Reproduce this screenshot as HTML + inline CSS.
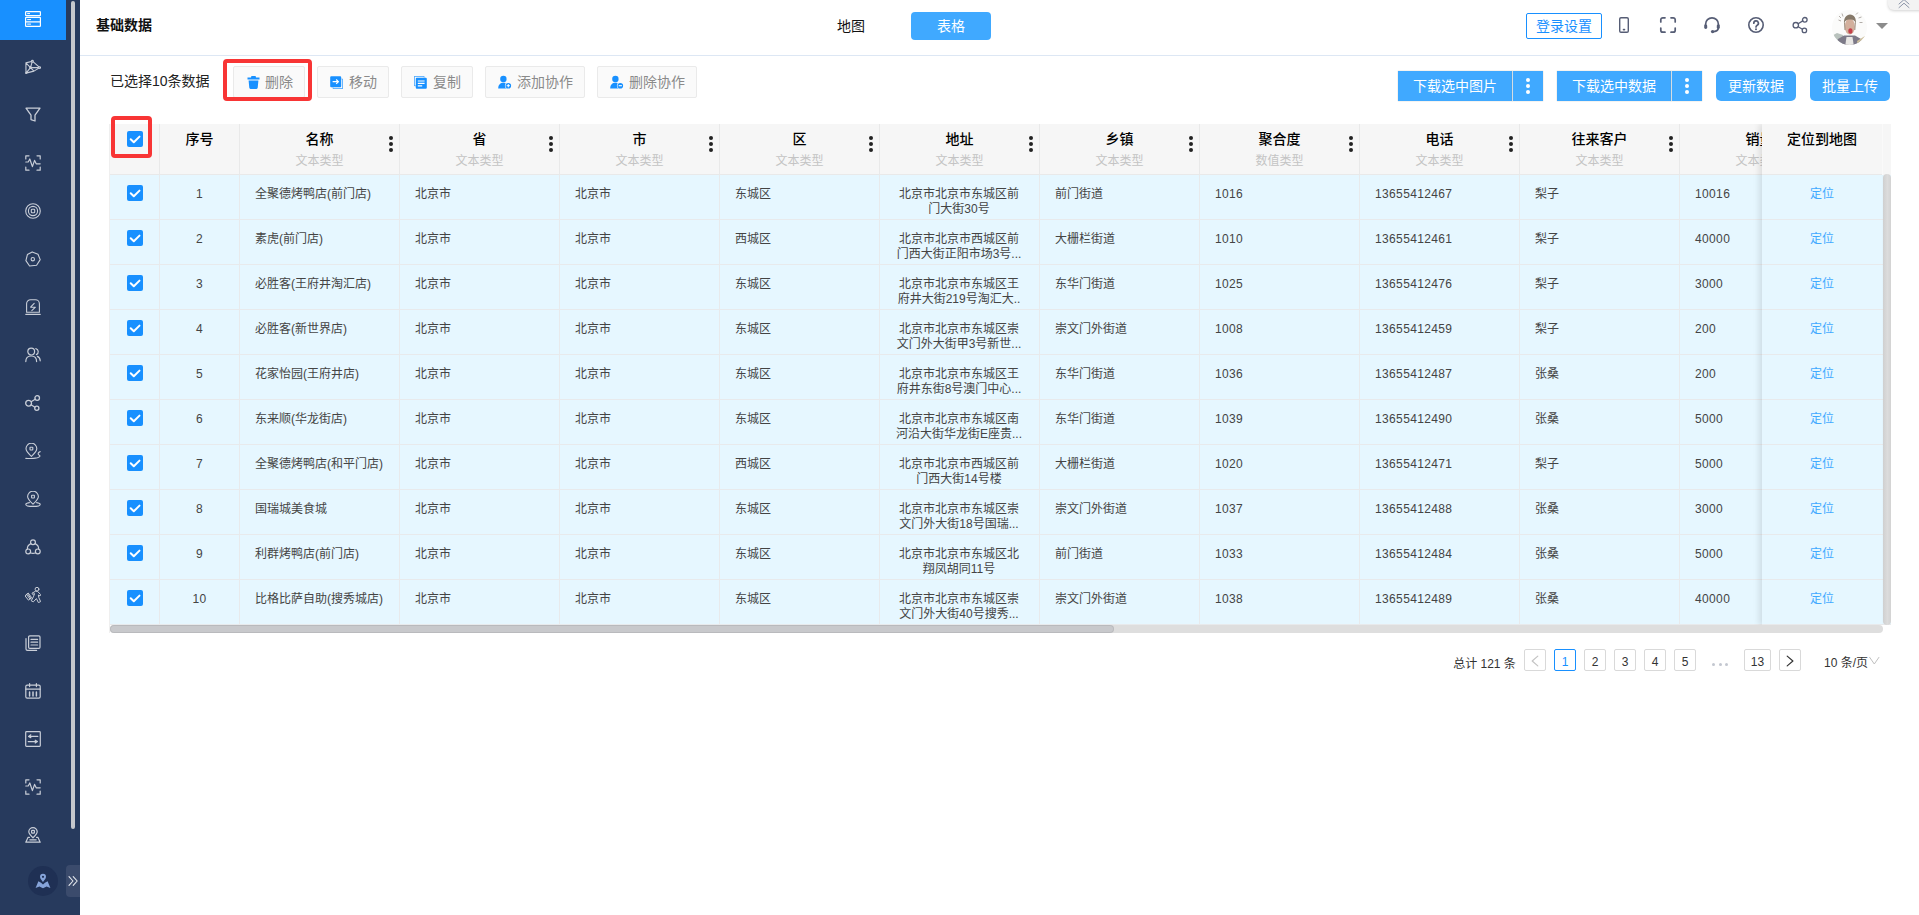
<!DOCTYPE html>
<html lang="zh-CN">
<head>
<meta charset="utf-8">
<title>基础数据</title>
<style>
*{box-sizing:border-box;margin:0;padding:0}
html,body{width:1919px;height:915px;overflow:hidden;background:#fff}
body{font-family:"Liberation Sans","Noto Sans CJK SC",sans-serif;font-size:12px;color:#333;position:relative}
.abs{position:absolute}
/* sidebar */
.side{position:absolute;left:0;top:0;width:80px;height:915px;background:#273a5d}
.side .act{position:absolute;left:0;top:0;width:66px;height:40px;background:#1890ff}
.side svg.ic{position:absolute;left:25px;width:16px;height:16px;fill:none;stroke:#c9ced8;stroke-width:1.1;stroke-linecap:round;stroke-linejoin:round}
.side .sb{position:absolute;left:71px;top:1px;width:4px;height:828px;background:#c5c7cc;border-radius:3px}
.side .circ{position:absolute;left:28px;top:866px;width:30px;height:30px;border-radius:50%;background:#1f3054}
.side .exp{position:absolute;left:66px;top:865px;width:14px;height:32px;background:#3b4b6c;border-radius:4px 0 0 4px}
/* header */
.hdr{position:absolute;left:80px;top:0;width:1839px;height:56px;border-bottom:1px solid #dde7f4;background:#fff}
.title{position:absolute;left:96px;top:15px;font-size:14px;line-height:20px;font-weight:bold;color:#111}
.tab1{position:absolute;left:811px;top:12px;width:80px;height:28px;line-height:28px;text-align:center;font-size:14px;color:#111}
.tab2{position:absolute;left:911px;top:12px;width:80px;height:28px;line-height:28px;text-align:center;font-size:14px;color:#fff;background:#40a9ff;border-radius:4px}
.login{position:absolute;left:1526px;top:13px;width:76px;height:26px;border:1px solid #1890ff;border-radius:2px;color:#1890ff;font-size:14px;line-height:24px;text-align:center;background:#fff}
.hic{position:absolute;fill:none;stroke:#565d75;stroke-width:1.6;stroke-linecap:round;stroke-linejoin:round}
.avatar{position:absolute;left:1832px;top:10px;width:35px;height:35px;border-radius:50%;overflow:hidden}
.caret{position:absolute;left:1876px;top:23px;width:0;height:0;border-left:6px solid transparent;border-right:6px solid transparent;border-top:6px solid #8c8c8c}
.fold{position:absolute;left:1888px;top:-6px;width:40px;height:16px;background:#f3f3f3;border-radius:6px;box-shadow:0 1px 3px rgba(0,0,0,.18)}
/* toolbar */
.sel{position:absolute;left:110px;top:71px;font-size:14px;line-height:20px;color:#222}
.tb{position:absolute;top:66px;height:32px;background:#fafafa;border:1px solid #eaeaea;border-radius:2px;font-size:14px;color:#8a8a8a;line-height:30px;padding-left:31px;white-space:nowrap}
.tb svg{position:absolute;left:13px;top:9px;width:13px;height:13px;fill:#1890ff}
.red{position:absolute;border:4px solid #f83535;border-radius:4px}
.bb{position:absolute;top:71px;height:30px;background:#40a9ff;color:#fff;font-size:14px;line-height:30px;text-align:center;white-space:nowrap}
.bb.sq{box-shadow:0 0 1px rgba(120,90,60,.45)}
.bb.rd{border-radius:5px}
.bb i{position:absolute;left:50%;margin-left:-2px;width:4px;height:4px;border-radius:50%;background:#fff}
/* table */
.tbl{position:absolute;left:110px;top:124px;width:1781px;height:510px;overflow:hidden}
.thead{position:absolute;left:0;top:0;width:1781px;height:51px;background:#f6f6f6;border-bottom:1px solid #e9e9e9}
.th{position:absolute;top:0;height:51px;width:160px;border-right:1px solid #e9e9e9;text-align:center}
.th b{display:block;font-size:14px;line-height:20px;margin-top:5px;color:#000;font-weight:500}
.th em{display:block;font-style:normal;font-size:12px;line-height:18px;color:#c4c4c4;margin-top:3px}
.th .dots{position:absolute;right:6px;top:12px;width:4px;height:16px}
.th .dots i{position:absolute;left:0;width:4px;height:4px;border-radius:50%;background:#222}
.tbody{position:absolute;left:0;top:51px;width:1781px;height:450px;background:#e6f7ff}
.tr{position:absolute;left:0;width:1781px;height:45px;border-bottom:1px solid #e8eaec;display:flex}
.td{flex:0 0 160px;width:160px;height:45px;border-right:1px solid #e8eaec;padding:12px 15px 0 15px;line-height:15px;font-size:12px;color:#444;white-space:nowrap;overflow:hidden}
.td.c0{flex-basis:50px;width:50px;padding:10px 0 0 17px}
.td.c1{flex-basis:80px;width:80px;text-align:center;padding-left:0;padding-right:0}
.td.addr{text-align:center;white-space:nowrap;padding-left:0;padding-right:1px}
.n{letter-spacing:.36px}
.cb{display:block;width:16px;height:16px;background:#1890ff;border-radius:2px}
.cb svg{display:block;width:16px;height:16px;fill:none;stroke:#fff;stroke-width:2;stroke-linecap:round;stroke-linejoin:round}
.fix{position:absolute;left:1652px;top:0;width:120px;height:501px;box-shadow:-3px 0 6px rgba(0,0,0,.10);background:#e6f7ff}
.fth{height:51px;background:#f6f6f6;border-bottom:1px solid #e9e9e9;text-align:center;font-size:14px;font-weight:500;color:#000;line-height:20px;padding-top:5px}
.ftd{height:45px;border-bottom:1px solid #e8eaec;text-align:center;color:#40a9ff;font-size:12px;line-height:15px;padding-top:12px}
.gut{position:absolute;left:1772px;top:0;width:9px;height:51px;background:#f6f6f6;border-left:1px solid #fafafa}
.vsb{position:absolute;left:1773px;top:50px;width:8px;height:451px;background:linear-gradient(90deg,#cfcfcf,#dcdcdc 55%,#d3d3d3);border-radius:4px}
.hsbt{position:absolute;left:0;top:501px;width:1773px;height:8px;background:#dedede;border-radius:4px}
.hsb{position:absolute;left:0;top:501px;width:1004px;height:8px;background:#c8c9cc;border-radius:4px;box-shadow:inset 0 0 0 1px rgba(0,0,0,.07)}
/* pagination */
.pd{position:absolute;top:0;width:3px;height:3px;border-radius:50%;background:#c3c7d0}
.pg{position:absolute;top:649px;height:22px;line-height:20px;font-size:12px;color:#333;text-align:center}
.pg.bx{border:1px solid #d9d9d9;border-radius:2px;background:#fff;width:22px;line-height:24px}
.pg.on{border-color:#1890ff;color:#1890ff}
.pg svg{position:absolute;left:5px;top:5px;width:12px;height:12px;fill:none;stroke-width:1.2;stroke-linecap:round;stroke-linejoin:round}
</style>
</head>
<body>
<div class="side">
<div class="act"></div>
<svg class="ic" style="top:11px;stroke:#fff;stroke-width:1.2" viewBox="0 0 16 16"><rect x="0.6" y="0.6" width="14.8" height="4" rx="0.6"/><rect x="0.6" y="6.4" width="14.8" height="9" rx="0.6"/><path d="M0.6 10.9H15.4"/><path d="M2.6 2.6h2M2.6 8.6h3M2.6 13.1h3" stroke-width="1"/></svg>
<svg class="ic" style="top:59px" viewBox="0 0 16 16"><path d="M0.900 3.900L7.400 2.200L14.800 8.600L8.900 12.100L1 14.100ZM5.500 8.600H14.800M5.500 8.600L7.400 2.200M5.500 8.600L0.900 3.900M5.500 8.600L1 14.100M5.500 8.600L8.900 12.100"/><circle cx="5.500" cy="8.600" r="1.300" fill="#c9ced8" stroke="none"/><circle cx="1.200" cy="14" r="1.100" fill="#c9ced8" stroke="none"/><circle cx="7.400" cy="2.300" r="0.900" fill="#273a5d"/><circle cx="14.600" cy="8.600" r="0.900" fill="#273a5d"/></svg>
<svg class="ic" style="top:107px;stroke-width:1.3" viewBox="0 0 16 16"><path d="M1 1.2H15L10 8.2V14L6 12.6V8.2Z"/></svg>
<svg class="ic" style="top:155px;stroke-width:1.2" viewBox="0 0 16 16"><path d="M0.8 4V0.8H4M12 0.8h3.2V4M15.2 12v3.2H12M4 15.2H0.8V12"/><path d="M0.8 7h2.4l1.6-3l2.6 7.6l2.2-6.2l1.6 3.4h4"/></svg>
<svg class="ic" style="top:203px" viewBox="0 0 16 16"><circle cx="8" cy="8" r="7.3"/><circle cx="8" cy="8" r="4.6"/><rect x="6.3" y="6.3" width="3.4" height="3.4" rx="0.8"/></svg>
<svg class="ic" style="top:251px" viewBox="0 0 16 16"><path d="M7.2 0.9L13 3.2L15.2 8.6L11.6 14.2L4.6 15L0.9 9.6L2.4 3.6Z"/><circle cx="7.8" cy="8.2" r="1.7"/></svg>
<svg class="ic" style="top:299px" viewBox="0 0 16 16"><path d="M1.6 13.2V4.8a4 4 0 0 1 4-4h4.8a4 4 0 0 1 4 4v8.4Z"/><path d="M0.8 15.4H15.2"/><path d="M9.2 4.4L5.6 8.2H10.4L6.8 11.6"/></svg>
<svg class="ic" style="top:347px;stroke-width:1.2" viewBox="0 0 16 16"><circle cx="6.2" cy="4.6" r="3.4"/><path d="M0.8 14.6c0-3.6 2.4-5.6 5.4-5.6s5.4 2 5.4 5.6"/><path d="M10.8 1.6a3.2 3.2 0 0 1 0.6 6"/><path d="M12.4 9.4c1.8.8 2.8 2.4 2.8 4.4"/></svg>
<svg class="ic" style="top:395px;stroke-width:1.3" viewBox="0 0 16 16"><circle cx="3.6" cy="8.2" r="2.9"/><circle cx="12.2" cy="3" r="2.3"/><circle cx="11.8" cy="13.2" r="2.1"/><path d="M6.1 6.7L10.2 4.2M6.1 9.8L9.9 12.2"/></svg>
<svg class="ic" style="top:443px" viewBox="0 0 16 16"><path d="M6.4 13.4C3.6 10.8 1 8.6 1 5.6A5.4 5.4 0 0 1 11.8 5.6C11.8 8.6 9.2 10.8 6.4 13.4Z"/><rect x="5" y="4.2" width="2.8" height="2.8" rx="0.4"/><path d="M0.8 15.4c4 .4 8 .2 11.6-.6c2.4-.6 3.4-1.800 1.600-2.800c-1.600-1 -.6-3 1.200-3.400"/></svg>
<svg class="ic" style="top:491px" viewBox="0 0 16 16"><path d="M8 13.2C5.200 10.600 2.600 8.400 2.600 5.600A5.400 5.400 0 0 1 13.400 5.600C13.400 8.400 10.800 10.600 8 13.200Z"/><rect x="6.600" y="4.200" width="2.800" height="2.800" rx="0.400"/><path d="M4.400 11.600C2.200 12 .8 12.600.8 13.400c0 1.200 3.200 2 7.200 2s7.200-.8 7.200-2c0-.8-1.400-1.400-3.600-1.800"/></svg>
<svg class="ic" style="top:539px;stroke-width:1.2" viewBox="0 0 16 16"><circle cx="8" cy="3.200" r="2.400"/><circle cx="3.200" cy="12.400" r="2.400"/><circle cx="12.800" cy="12.400" r="2.400"/><path d="M5.800 4.600C3.400 5.800 2.200 7.800 2.400 10M10.200 4.600c2.400 1.200 3.600 3.200 3.400 5.400M5.400 13.800c1.600.8 3.600.8 5.200 0"/></svg>
<svg class="ic" style="top:587px;stroke-width:1" viewBox="0 0 16 16"><circle cx="12" cy="2.200" r="1.900"/><path d="M10.400 4.300L7 6.200L7.600 7.400L9.600 6.600L8.400 9.800L6.200 13.800L8.400 14.800L11.400 11.600L13.400 15.600L15.600 14.600L13.800 10.600L13.400 8L15 9L15.600 7.600L12.800 4.600Z"/><path d="M0.300 8.600L3.200 6L6.600 10.600L3.800 12.900Z"/><path d="M1.500 7.600L5 12M2.500 6.800L5.800 11.300"/></svg>
<svg class="ic" style="top:635px;stroke-width:1.2" viewBox="0 0 16 16"><rect x="3.600" y="0.800" width="11.400" height="12.600" rx="1.200"/><path d="M1 3.600V14a1.400 1.400 0 0 0 1.400 1.400H11.600"/><path d="M6 4.400H12.600M6 7.200H12.600M6 10H12.600"/></svg>
<svg class="ic" style="top:683px;stroke-width:1.2" viewBox="0 0 16 16"><rect x="0.800" y="2.200" width="14.400" height="13" rx="1.400"/><path d="M0.800 6.200H15.200M4.600 0.600V3.600M11.400 0.600V3.600"/><path d="M4.600 9v4M8 9v4M11.400 9v4" stroke-width="1.500"/></svg>
<svg class="ic" style="top:731px;stroke-width:1.200" viewBox="0 0 16 16"><rect x="0.700" y="0.700" width="14.600" height="14.600" rx="0.800"/><path d="M12.800 5.400H3.600L5.800 3.800M3.600 5.400L5.800 6.600M3.200 10.600H12.400L10.200 9.200M12.400 10.600L10.200 12"/></svg>
<svg class="ic" style="top:779px;stroke-width:1.2" viewBox="0 0 16 16"><path d="M0.8 4V0.8H4M12 0.8h3.2V4M15.2 12v3.2H12M4 15.200H0.800V12"/><path d="M0.800 7h2.400l1.600-3l2.600 7.600l2.200-6.200l1.600 3.400h4"/></svg>
<svg class="ic" style="top:827px;stroke-width:1.2" viewBox="0 0 16 16"><path d="M8 10.800C5.800 8.800 3.800 7 3.800 4.800A4.200 4.200 0 0 1 12.200 4.800C12.200 7 10.200 8.800 8 10.800Z"/><rect x="6.600" y="3.400" width="2.800" height="2.800" rx="0.600"/><path d="M4.400 10.400H3L0.800 15.200H15.200L13 10.400H11.600"/><path d="M4.800 12.800H11.200"/></svg>
<div class="sb"></div>
<div class="circ"><svg viewBox="0 0 16 16" style="position:absolute;left:7px;top:7px;width:16px;height:16px;fill:#86a4da"><path d="M8 0.800a3 3 0 0 1 3 3c0 2-3 5.200-3 5.200S5 5.800 5 3.800a3 3 0 0 1 3-3Zm0 1.900a1.100 1.100 0 1 0 0 2.200a1.100 1.100 0 0 0 0-2.200Z" fill-rule="evenodd"/><path d="M0.600 15L3.400 8.200L6 9.800L8 11.600L10 9.800L12.600 8.200L15.400 15L11.600 13.600L8 15.200L4.400 13.600Z"/></svg></div>
<div class="exp"><svg viewBox="0 0 14 32" style="position:absolute;left:0;top:0;width:14px;height:32px;fill:none;stroke:#e6e9ef;stroke-width:1.100;stroke-linecap:round;stroke-linejoin:round"><path d="M3 11.600L7 16L3 20.400M7.200 11.600L11.200 16L7.200 20.400"/></svg></div>
</div>
<div class="hdr"></div>
<div class="title">基础数据</div>
<div class="tab1">地图</div>
<div class="tab2">表格</div>
<div class="login">登录设置</div>
<svg class="hic" style="left:1618px;top:16px;width:12px;height:18px" viewBox="0 0 12 18"><rect x="1.700" y="1.700" width="8.600" height="14.600" rx="1.300" stroke-width="1.400"/><path d="M5.600 13.600h0.800" stroke-width="1.800"/></svg>
<svg class="hic" style="left:1659px;top:16px;width:18px;height:18px;stroke-width:1.7" viewBox="0 0 18 18"><path d="M1.800 6V3.800a2 2 0 0 1 2-2H6M12 1.800h2.200a2 2 0 0 1 2 2V6M16.200 12v2.200a2 2 0 0 1-2 2H12M6 16.200H3.800a2 2 0 0 1-2-2V12"/></svg>
<svg class="hic" style="left:1703px;top:16px;width:18px;height:18px;stroke-width:1.7" viewBox="0 0 18 18"><path d="M2.600 9.400V8.200a6.400 6.400 0 0 1 12.800 0V9.400"/><path d="M15.400 11.600c0 2.600-2 3.800-4.600 4"/><rect x="1.200" y="8.400" width="3" height="4.600" rx="1.400" fill="#565d75" stroke="none"/><rect x="13.800" y="8.400" width="3" height="4.600" rx="1.400" fill="#565d75" stroke="none"/><circle cx="9.600" cy="15.600" r="1.700" fill="#565d75" stroke="none"/></svg>
<svg class="hic" style="left:1747px;top:16px;width:18px;height:18px;stroke-width:1.600" viewBox="0 0 18 18"><circle cx="9" cy="9" r="7.200"/><path d="M6.800 7.200a2.300 2.300 0 1 1 3.400 2c-.8.500-1.200 1-1.200 1.800" stroke-width="1.700"/><circle cx="9" cy="13.200" r="1" fill="#565d75" stroke="none"/></svg>
<svg class="hic" style="left:1791px;top:16px;width:18px;height:18px;stroke-width:1.300" viewBox="0 0 18 18"><circle cx="4.800" cy="9.200" r="2.700"/><circle cx="13.800" cy="3.800" r="2.300"/><circle cx="13.400" cy="14.400" r="2.200"/><path d="M7.200 7.700L11.700 4.900M7.200 10.800L11.400 13.300"/></svg>
<div class="avatar"><svg viewBox="0 0 35 35" width="35" height="35">
<rect width="35" height="35" fill="#fbfbfa"/>
<g>
<path d="M-2 27L5 23L11 25L12 37L-2 37Z" fill="#b9c2bd"/>
<path d="M3 37L6 29L12 25.500L23 25.500L29 29L32 37Z" fill="#7d7a88"/>
<path d="M14.500 27L20.500 27L22 37L13 37Z" fill="#e9e7e4"/>
<path d="M25 31L33 26L36 37L26 37Z" fill="#cdbf9c"/>
<ellipse cx="17.800" cy="16.500" rx="5" ry="8" fill="#d3b09d"/>
<path d="M12 14C11.500 8 14.500 4.500 18 4.500C22 4.500 24.500 8 23.800 14C23 10.500 21.500 9.500 18 9.500C14.500 9.500 13 10.500 12 14Z" fill="#857868"/>
<path d="M12.500 12.500L13 20M23.300 12.500L22.800 20" stroke="#9a8c7c" stroke-width="1" fill="none"/>
<ellipse cx="18.400" cy="21" rx="2.100" ry="2.800" fill="#c4404a"/>
<path d="M7 6l2 2M10 3.500l1 3M6.500 10l2.500 1M24 4.500l2-2M26.500 8l3-1M27.500 12.500l3 0" stroke="#a9a49e" stroke-width="0.900" fill="none"/>
</g>
</svg></div>
<div class="caret"></div>
<div class="fold"><svg viewBox="0 0 16 12" style="position:absolute;left:8px;top:5px;width:16px;height:12px;fill:none;stroke:#8c95a8;stroke-width:1;stroke-linecap:round;stroke-linejoin:round"><path d="M3 5L8 0.600L13 5M3 8.600L8 4.200L13 8.600"/></svg></div>
<div class="sel">已选择10条数据</div>
<div class="tb" style="left:233px;width:72px"><svg viewBox="0 0 13 13" style="left:12.500px"><path d="M4.400 0h4.200l.4 1.500h3.500v2H.5v-2H4Z"/><path d="M1.600 4.400h9.800l-.7 7.400a1.200 1.200 0 0 1-1.200 1.100H3.500a1.200 1.200 0 0 1-1.200-1.100Z"/></svg>删除</div>
<div class="tb" style="left:317px;width:72px"><svg viewBox="0 0 13 13" style="left:12px"><path d="M3 11.600V12a.8.800 0 0 0 .8.800H12a.8.800 0 0 0 .8-.8V3.800a.8.800 0 0 0-.8-.8h-.4" fill="none" stroke="#1890ff" stroke-width="0.900"/><path d="M1.200 0.200H10.200a1 1 0 0 1 1 1V10.200a1 1 0 0 1-1 1H1.200a1 1 0 0 1-1-1V1.200a1 1 0 0 1 1-1Z"/><path d="M2.600 5.700H8.200M6.200 3.500L8.400 5.700L6.200 7.900" stroke="#fff" stroke-width="1.200" fill="none"/></svg>移动</div>
<div class="tb" style="left:401px;width:72px"><svg viewBox="0 0 13 13" style="left:12px"><path d="M1.600 9.800H1a.8.800 0 0 1-.8-.8V1a.8.800 0 0 1 .8-.8H9.400a.8.800 0 0 1 .8.800v.4" fill="none" stroke="#1890ff" stroke-width="0.900"/><path d="M2.800 1.800H11.800a1 1 0 0 1 1 1V11.800a1 1 0 0 1-1 1H2.800a1 1 0 0 1-1-1V2.800a1 1 0 0 1 1-1Z"/><path d="M3.800 5H10.600M3.800 7.400H10.600M3.800 9.800H8.200" stroke="#fff" stroke-width="1.200" fill="none"/></svg>复制</div>
<div class="tb" style="left:485px;width:100px"><svg viewBox="0 0 14 14" style="left:12px;top:8px;width:14px;height:14px"><circle cx="5.400" cy="4" r="3.200"/><path d="M0.200 13.400c0-3.700 2.200-5.600 5.200-5.600s5.200 1.900 5.200 5.600Z"/><circle cx="10.300" cy="10.700" r="3.400" fill="#fafafa"/><circle cx="10.300" cy="10.700" r="2.800"/><path d="M8.700 10.700h3.200M10.300 9.100v3.200" stroke="#fff" stroke-width="1" fill="none"/></svg>添加协作</div>
<div class="tb" style="left:597px;width:100px"><svg viewBox="0 0 14 14" style="left:12px;top:8px;width:14px;height:14px"><circle cx="5.400" cy="4" r="3.200"/><path d="M0.200 13.400c0-3.700 2.200-5.600 5.200-5.600s5.200 1.900 5.200 5.600Z"/><circle cx="10.300" cy="10.700" r="3.400" fill="#fafafa"/><circle cx="10.300" cy="10.700" r="2.800"/><path d="M8.700 10.700h3.200" stroke="#fff" stroke-width="1.100" fill="none"/></svg>删除协作</div>
<div class="red" style="left:223px;top:59px;width:89px;height:42px"></div>
<div class="bb sq" style="left:1398px;width:114px">下载选中图片</div>
<div class="bb sq" style="left:1512px;width:31px;border-left:1px solid #d5dde3"><i style="top:7px"></i><i style="top:13px"></i><i style="top:19px"></i></div>
<div class="bb sq" style="left:1557px;width:114px">下载选中数据</div>
<div class="bb sq" style="left:1671px;width:31px;border-left:1px solid #d5dde3"><i style="top:7px"></i><i style="top:13px"></i><i style="top:19px"></i></div>
<div class="bb rd" style="left:1716px;width:80px">更新数据</div>
<div class="bb rd" style="left:1810px;width:80px">批量上传</div>
<div class="abs" style="left:109px;top:124px;width:1px;height:509px;background:#efefef"></div>
<div class="tbl">
<div class="thead">
<div class="th" style="left:0;width:50px"><span class="cb" style="position:absolute;left:17px;top:7px"><svg viewBox="0 0 16 16"><path d="M3.700 8.300L6.800 11.300L12.500 5.600"/></svg></span></div>
<div class="th" style="left:50px;width:80px"><b>序号</b></div>
<div class="th" style="left:130px"><b>名称</b><em>文本类型</em><span class="dots"><i style="top:0"></i><i style="top:6px"></i><i style="top:12px"></i></span></div>
<div class="th" style="left:290px"><b>省</b><em>文本类型</em><span class="dots"><i style="top:0"></i><i style="top:6px"></i><i style="top:12px"></i></span></div>
<div class="th" style="left:450px"><b>市</b><em>文本类型</em><span class="dots"><i style="top:0"></i><i style="top:6px"></i><i style="top:12px"></i></span></div>
<div class="th" style="left:610px"><b>区</b><em>文本类型</em><span class="dots"><i style="top:0"></i><i style="top:6px"></i><i style="top:12px"></i></span></div>
<div class="th" style="left:770px"><b>地址</b><em>文本类型</em><span class="dots"><i style="top:0"></i><i style="top:6px"></i><i style="top:12px"></i></span></div>
<div class="th" style="left:930px"><b>乡镇</b><em>文本类型</em><span class="dots"><i style="top:0"></i><i style="top:6px"></i><i style="top:12px"></i></span></div>
<div class="th" style="left:1090px"><b>聚合度</b><em>数值类型</em><span class="dots"><i style="top:0"></i><i style="top:6px"></i><i style="top:12px"></i></span></div>
<div class="th" style="left:1250px"><b>电话</b><em>文本类型</em><span class="dots"><i style="top:0"></i><i style="top:6px"></i><i style="top:12px"></i></span></div>
<div class="th" style="left:1410px"><b>往来客户</b><em>文本类型</em><span class="dots"><i style="top:0"></i><i style="top:6px"></i><i style="top:12px"></i></span></div>
<div class="th" style="left:1570px"><b>销量</b><em>文本类型</em><span class="dots"><i style="top:0"></i><i style="top:6px"></i><i style="top:12px"></i></span></div>
</div>
<div class="tbody">
<div class="tr" style="top:0px">
<div class="td c0"><span class="cb"><svg viewBox="0 0 16 16"><path d="M3.700 8.300L6.800 11.300L12.500 5.600"/></svg></span></div>
<div class="td c1 n">1</div>
<div class="td">全聚德烤鸭店(前门店)</div>
<div class="td">北京市</div>
<div class="td">北京市</div>
<div class="td">东城区</div>
<div class="td addr">北京市北京市东城区前<br>门大街30号</div>
<div class="td">前门街道</div>
<div class="td n">1016</div>
<div class="td n">13655412467</div>
<div class="td">梨子</div>
<div class="td n">10016</div>
</div>
<div class="tr" style="top:45px">
<div class="td c0"><span class="cb"><svg viewBox="0 0 16 16"><path d="M3.700 8.300L6.800 11.300L12.500 5.600"/></svg></span></div>
<div class="td c1 n">2</div>
<div class="td">素虎(前门店)</div>
<div class="td">北京市</div>
<div class="td">北京市</div>
<div class="td">西城区</div>
<div class="td addr">北京市北京市西城区前<br>门西大街正阳市场3号...</div>
<div class="td">大栅栏街道</div>
<div class="td n">1010</div>
<div class="td n">13655412461</div>
<div class="td">梨子</div>
<div class="td n">40000</div>
</div>
<div class="tr" style="top:90px">
<div class="td c0"><span class="cb"><svg viewBox="0 0 16 16"><path d="M3.700 8.300L6.800 11.300L12.500 5.600"/></svg></span></div>
<div class="td c1 n">3</div>
<div class="td">必胜客(王府井淘汇店)</div>
<div class="td">北京市</div>
<div class="td">北京市</div>
<div class="td">东城区</div>
<div class="td addr">北京市北京市东城区王<br>府井大街219号淘汇大..</div>
<div class="td">东华门街道</div>
<div class="td n">1025</div>
<div class="td n">13655412476</div>
<div class="td">梨子</div>
<div class="td n">3000</div>
</div>
<div class="tr" style="top:135px">
<div class="td c0"><span class="cb"><svg viewBox="0 0 16 16"><path d="M3.700 8.300L6.800 11.300L12.500 5.600"/></svg></span></div>
<div class="td c1 n">4</div>
<div class="td">必胜客(新世界店)</div>
<div class="td">北京市</div>
<div class="td">北京市</div>
<div class="td">东城区</div>
<div class="td addr">北京市北京市东城区崇<br>文门外大街甲3号新世...</div>
<div class="td">崇文门外街道</div>
<div class="td n">1008</div>
<div class="td n">13655412459</div>
<div class="td">梨子</div>
<div class="td n">200</div>
</div>
<div class="tr" style="top:180px">
<div class="td c0"><span class="cb"><svg viewBox="0 0 16 16"><path d="M3.700 8.300L6.800 11.300L12.500 5.600"/></svg></span></div>
<div class="td c1 n">5</div>
<div class="td">花家怡园(王府井店)</div>
<div class="td">北京市</div>
<div class="td">北京市</div>
<div class="td">东城区</div>
<div class="td addr">北京市北京市东城区王<br>府井东街8号澳门中心...</div>
<div class="td">东华门街道</div>
<div class="td n">1036</div>
<div class="td n">13655412487</div>
<div class="td">张桑</div>
<div class="td n">200</div>
</div>
<div class="tr" style="top:225px">
<div class="td c0"><span class="cb"><svg viewBox="0 0 16 16"><path d="M3.700 8.300L6.800 11.300L12.500 5.600"/></svg></span></div>
<div class="td c1 n">6</div>
<div class="td">东来顺(华龙街店)</div>
<div class="td">北京市</div>
<div class="td">北京市</div>
<div class="td">东城区</div>
<div class="td addr">北京市北京市东城区南<br>河沿大街华龙街E座贵...</div>
<div class="td">东华门街道</div>
<div class="td n">1039</div>
<div class="td n">13655412490</div>
<div class="td">张桑</div>
<div class="td n">5000</div>
</div>
<div class="tr" style="top:270px">
<div class="td c0"><span class="cb"><svg viewBox="0 0 16 16"><path d="M3.700 8.300L6.800 11.300L12.500 5.600"/></svg></span></div>
<div class="td c1 n">7</div>
<div class="td">全聚德烤鸭店(和平门店)</div>
<div class="td">北京市</div>
<div class="td">北京市</div>
<div class="td">西城区</div>
<div class="td addr">北京市北京市西城区前<br>门西大街14号楼</div>
<div class="td">大栅栏街道</div>
<div class="td n">1020</div>
<div class="td n">13655412471</div>
<div class="td">梨子</div>
<div class="td n">5000</div>
</div>
<div class="tr" style="top:315px">
<div class="td c0"><span class="cb"><svg viewBox="0 0 16 16"><path d="M3.700 8.300L6.800 11.300L12.500 5.600"/></svg></span></div>
<div class="td c1 n">8</div>
<div class="td">国瑞城美食城</div>
<div class="td">北京市</div>
<div class="td">北京市</div>
<div class="td">东城区</div>
<div class="td addr">北京市北京市东城区崇<br>文门外大街18号国瑞...</div>
<div class="td">崇文门外街道</div>
<div class="td n">1037</div>
<div class="td n">13655412488</div>
<div class="td">张桑</div>
<div class="td n">3000</div>
</div>
<div class="tr" style="top:360px">
<div class="td c0"><span class="cb"><svg viewBox="0 0 16 16"><path d="M3.700 8.300L6.800 11.300L12.500 5.600"/></svg></span></div>
<div class="td c1 n">9</div>
<div class="td">利群烤鸭店(前门店)</div>
<div class="td">北京市</div>
<div class="td">北京市</div>
<div class="td">东城区</div>
<div class="td addr">北京市北京市东城区北<br>翔凤胡同11号</div>
<div class="td">前门街道</div>
<div class="td n">1033</div>
<div class="td n">13655412484</div>
<div class="td">张桑</div>
<div class="td n">5000</div>
</div>
<div class="tr" style="top:405px">
<div class="td c0"><span class="cb"><svg viewBox="0 0 16 16"><path d="M3.700 8.300L6.800 11.300L12.500 5.600"/></svg></span></div>
<div class="td c1 n">10</div>
<div class="td">比格比萨自助(搜秀城店)</div>
<div class="td">北京市</div>
<div class="td">北京市</div>
<div class="td">东城区</div>
<div class="td addr">北京市北京市东城区崇<br>文门外大街40号搜秀...</div>
<div class="td">崇文门外街道</div>
<div class="td n">1038</div>
<div class="td n">13655412489</div>
<div class="td">张桑</div>
<div class="td n">40000</div>
</div>
</div>
<div class="fix"><div class="fth">定位到地图</div>
<div class="ftd">定位</div>
<div class="ftd">定位</div>
<div class="ftd">定位</div>
<div class="ftd">定位</div>
<div class="ftd">定位</div>
<div class="ftd">定位</div>
<div class="ftd">定位</div>
<div class="ftd">定位</div>
<div class="ftd">定位</div>
<div class="ftd">定位</div>
</div>
<div class="gut"></div><div class="vsb"></div><div class="hsbt"></div><div class="hsb"></div>
</div>
<div class="red" style="left:111px;top:116px;width:41px;height:42px"></div>
<div class="pg" style="left:1453px;top:654px;width:63px;white-space:nowrap">总计 121 条</div>
<div class="pg bx" style="left:1524px"><svg viewBox="0 0 12 12" style="stroke:#c4c4c4"><path d="M7.800 1.100L2.200 6L7.800 10.900"/></svg></div>
<div class="pg bx on" style="left:1554px">1</div>
<div class="pg bx" style="left:1584px">2</div>
<div class="pg bx" style="left:1614px">3</div>
<div class="pg bx" style="left:1644px">4</div>
<div class="pg bx" style="left:1674px">5</div>
<div class="abs" style="left:1712px;top:663px;width:17px;height:3px"><i class="pd" style="left:0"></i><i class="pd" style="left:6.500px"></i><i class="pd" style="left:13px"></i></div>
<div class="pg bx" style="left:1744px;width:27px">13</div>
<div class="pg bx" style="left:1779px"><svg viewBox="0 0 12 12" style="stroke:#333"><path d="M2.200 1.100L7.900 6L2.200 10.900"/></svg></div>
<div class="pg" style="left:1824px;top:653px;width:44px;white-space:nowrap">10 条/页</div>
<svg class="abs" style="left:1868px;top:655px;width:12px;height:12px;fill:none;stroke:#bfbfbf;stroke-width:1;stroke-linecap:round;stroke-linejoin:round" viewBox="0 0 12 12"><path d="M1.700 2.400L6.300 9L10.900 2.400"/></svg>
</body>
</html>
